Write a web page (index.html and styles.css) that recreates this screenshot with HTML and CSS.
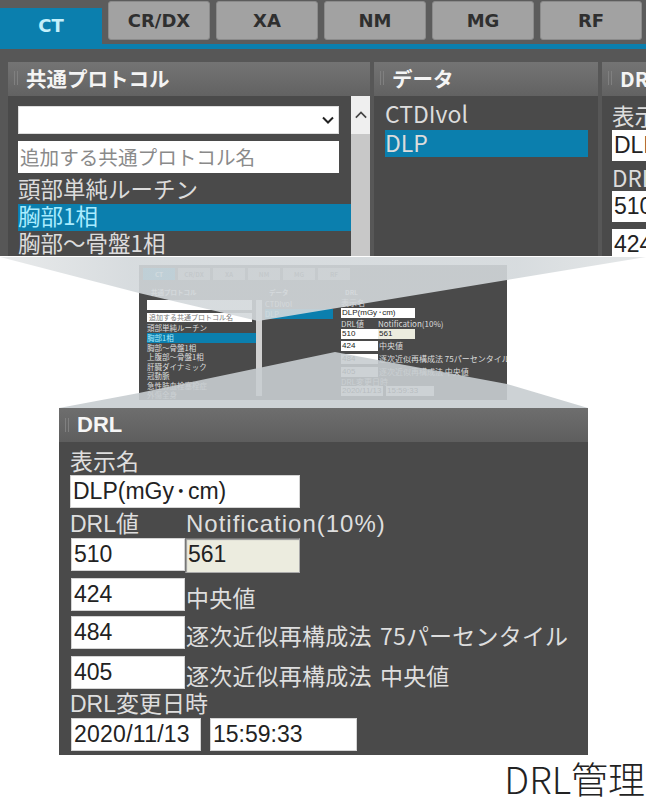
FILE: index.html
```html
<!DOCTYPE html>
<html lang="ja">
<head>
<meta charset="utf-8">
<title>DRL管理</title>
<link rel="stylesheet" href="styles.css">
</head>
<body>
<div class="page">
  <section class="top">
    <nav class="tabs">
      <div class="tab tab-on">CT</div>
      <div class="tab">CR/DX</div>
      <div class="tab">XA</div>
      <div class="tab">NM</div>
      <div class="tab">MG</div>
      <div class="tab">RF</div>
    </nav>
    <div class="tabline"></div>
    <div class="cols">
      <div class="col col-a">
        <div class="head"><span class="grip"></span>共通プロトコル</div>
        <div class="col-a-body">
          <div class="col-a-main">
            <div class="sel"><svg class="chev" viewBox="0 0 12 8"><path d="M1 1.5 6 6.5 11 1.5" fill="none" stroke="#222" stroke-width="2"/></svg></div>
            <div class="ph">追加する共通プロトコル名</div>
            <div class="item">頭部単純ルーチン</div>
            <div class="item item-on">胸部1相</div>
            <div class="item">胸部～骨盤1相</div>
          </div>
          <div class="bar"><div class="bar-btn"><svg class="chev" viewBox="0 0 14 9"><path d="M1 7.5 7 1.5 13 7.5" fill="none" stroke="#444" stroke-width="2"/></svg></div></div>
        </div>
      </div>
      <div class="col col-b">
        <div class="head"><span class="grip"></span>データ</div>
        <div class="col-b-body">
          <div class="ditem">CTDIvol</div>
          <div class="ditem item-on">DLP</div>
        </div>
      </div>
      <div class="col col-c">
        <div class="head"><span class="grip"></span>DRL</div>
        <div class="col-c-body">
          <div class="clabel">表示名</div>
          <div class="cfield">DLP(mGy<span class="dot">・</span>cm)</div>
          <div class="clabel clabel-b">DRL値</div>
          <div class="cfield">510</div>
          <div class="cfield cfield-b">424</div>
        </div>
      </div>
    </div>
  </section>

  <section class="middle">
    <div class="mini">
      <div class="m-tabs"><span class="m-tab m-tab-on">CT</span><span class="m-tab">CR/DX</span><span class="m-tab">XA</span><span class="m-tab">NM</span><span class="m-tab">MG</span><span class="m-tab">RF</span></div>
      <div class="m-cols">
        <div class="m-a">
          <div class="m-head">共通プロトコル</div>
          <div class="m-a-body">
            <div class="m-a-main">
              <div class="m-sel"></div>
              <div class="m-ph">追加する共通プロトコル名</div>
              <div class="m-item">頭部単純ルーチン</div>
              <div class="m-item m-on">胸部1相</div>
              <div class="m-item">胸部～骨盤1相</div>
              <div class="m-item">上腹部～骨盤1相</div>
              <div class="m-item">肝臓ダイナミック</div>
              <div class="m-item">冠動脈</div>
              <div class="m-item">急性肺血栓塞栓症</div>
              <div class="m-item">外傷全身</div>
            </div>
            <div class="m-bar"></div>
          </div>
        </div>
        <div class="m-b">
          <div class="m-head">データ</div>
          <div class="m-item m-dtop">CTDIvol</div>
          <div class="m-item m-on">DLP</div>
        </div>
        <div class="m-c">
          <div class="m-head">DRL</div>
          <div class="m-label">表示名</div>
          <div class="m-field m-wide">DLP(mGy<span class="m-dot">・</span>cm)</div>
          <div class="m-row m-label m-pair"><span class="m-cell">DRL値</span><span>Notification(10%)</span></div>
          <div class="m-row m-row-first"><div class="m-field m-cell">510</div><div class="m-field m-cell m-ro">561</div></div>
          <div class="m-row m-row-second"><div class="m-field m-cell">424</div><span class="m-note">中央値</span></div>
          <div class="m-row"><div class="m-field m-cell">484</div><span class="m-note">逐次近似再構成法 75パーセンタイル</span></div>
          <div class="m-row"><div class="m-field m-cell">405</div><span class="m-note">逐次近似再構成法 中央値</span></div>
          <div class="m-label">DRL変更日時</div>
          <div class="m-row m-dates"><div class="m-field m-date">2020/11/13</div><div class="m-field m-time">15:59:33</div></div>
        </div>
      </div>
    </div>
    <svg class="fans" viewBox="0 256 648 152" aria-hidden="true">
      <defs>
        <linearGradient id="fanTop" x1="0" x2="1" y1="0" y2="0">
          <stop offset="0" stop-color="#e6e8e9"/>
          <stop offset="0.2" stop-color="#d3d8db"/>
          <stop offset="0.8" stop-color="#d3d8db"/>
          <stop offset="1" stop-color="#e2e5e6"/>
        </linearGradient>
      </defs>
      <polygon points="0,257 646,257 507,280 258,321 139,293" fill="url(#fanTop)" fill-opacity="0.9"/>
      <polygon points="59,408 588,408 507,384 335,352 139,393" fill="#c8cdd0" fill-opacity="0.9"/>
    </svg>
  </section>

  <section class="panel">
    <div class="panel-head"><span class="grip"></span>DRL</div>
    <div class="panel-body">
      <div class="lab lab-name">表示名</div>
      <div class="inp inp-name">DLP(mGy<span class="dot">・</span>cm)</div>
      <div class="lab lab-pair"><span class="col1">DRL値</span><span class="notif">Notification(10%)</span></div>
      <div class="row row-first"><div class="inp inp-val">510</div><div class="inp inp-ro">561</div></div>
      <div class="row row-a"><div class="inp inp-val">424</div><span class="note">中央値</span></div>
      <div class="row row-b"><div class="inp inp-val">484</div><span class="note">逐次近似再構成法 75パーセンタイル</span></div>
      <div class="row row-a"><div class="inp inp-val">405</div><span class="note">逐次近似再構成法 中央値</span></div>
      <div class="lab lab-date">DRL変更日時</div>
      <div class="row row-date"><div class="inp inp-date">2020/11/13</div><div class="inp inp-time">15:59:33</div></div>
    </div>
  </section>

  <div class="caption">DRL管理</div>
</div>
</body>
</html>
```
FILE: styles.css
```css
* { box-sizing: border-box; }
html, body { margin: 0; padding: 0; background: #fff; }
body { font-family: "Noto Sans CJK JP", "Liberation Sans", sans-serif; }
.page { width: 648px; height: 800px; overflow: hidden; position: relative; }

/* top capture */
.top { width: 646px; height: 256px; background: #4a4a4a; overflow: hidden; }
.tabs { display: flex; gap: 6px; height: 44px; background: #5c5c5c; align-items: flex-start; padding-top: 1px; }
.tab { flex: 0 0 102px; height: 39px; background: #a2a2a2; border: 1px solid #8b8b8b; border-radius: 3px; font: bold 18px/37px "DejaVu Sans", sans-serif; color: #2f2f2f; text-align: center; }
.tab-on { height: 36px; margin-top: 7px; background: #0b7fae; border: 0; border-radius: 0; color: #c4f0fb; line-height: 36px; }
.tabline { height: 5px; background: #0b7fae; }
.cols { display: flex; gap: 4px; height: 207px; padding-left: 8px; background: #575757; padding-top: 13px; }
.col { display: flex; flex-direction: column; background: #4a4a4a; }
.col-a { width: 362px; }
.col-b { width: 224px; }
.col-c { flex: 1; min-width: 0; overflow: hidden; }
.head { height: 34px; flex: none; padding-bottom: 2px; background: linear-gradient(#747474, #626262); color: #f4f4f4; font-weight: bold; font-size: 20.5px; line-height: 30px; white-space: nowrap; display: flex; align-items: center; }
.grip { width: 4px; height: 14px; margin: 0 8px 0 6px; flex: none; border-left: 1px solid #808080; border-right: 1px solid #808080; }
.col-a-body { display: flex; flex: 1; min-height: 0; }
.col-a-main { width: 343px; padding: 10px 0 0 10px; overflow: hidden; }
.sel { width: 321px; height: 28px; background: #fff; border: 1px solid #ddd; display: flex; align-items: center; justify-content: flex-end; padding-right: 4px; }
.chev { width: 12px; height: 8px; display: block; }
.ph { width: 321px; height: 32px; margin: 7px 0 4px; background: #fff; color: #8a8a8a; font-size: 19.6px; line-height: 31px; padding-left: 2px; white-space: nowrap; }
.item { height: 27px; font-size: 22.5px; line-height: 23px; color: #dcdcdc; white-space: nowrap; }
.item-on { background: #0b7fae; color: #a9ecff; }
.bar { width: 19px; background: #c8c8c8; }
.bar-btn { height: 38px; background: #efefef; display: flex; align-items: center; justify-content: center; }
.col-b-body { padding: 5px 10px 0 11px; }
.ditem { height: 28px; font-size: 23px; line-height: 24px; color: #dcdcdc; }
.col-b-body .item-on { height: 27px; margin-top: 1px; line-height: 24px; }
.col-c-body { padding-left: 10px; width: 300px; }
.clabel { height: 34px; font-size: 22.5px; line-height: 38px; color: #dcdcdc; white-space: nowrap; }
.clabel-b { height: 30px; line-height: 32px; }
.cfield { width: 114px; height: 31px; background: #fff; color: #222; font: 23px/31px "Liberation Sans", sans-serif; padding-left: 2px; white-space: nowrap; }
.cfield-b { margin-top: 7px; }
.dot { margin: 0 -4.5px; }

/* middle */
.middle { height: 152px; position: relative; background: #fff; padding: 9px 0 0 139px; }
.mini { width: 368px; height: 135px; background: #4a4a4a; padding: 3px 0 0 0; overflow: hidden; color: #dcdcdc; font-size: 7.5px; line-height: 10px; }
.m-tabs { display: flex; gap: 3px; height: 12px; margin-bottom: 4px; padding-left: 4px; }
.m-tab { width: 32px; background: #9a9a9a; color: #333; font-size: 6.5px; line-height: 12px; text-align: center; font-weight: bold; }
.m-tab-on { background: #0b7fae; color: #c4f0fb; }
.m-cols { display: flex; padding-left: 8px; }
.m-a { width: 115px; margin-right: 3px; }
.m-b { width: 68px; margin-right: 8px; }
.m-c { width: 160px; font-size: 8px; }
.m-head { height: 14px; font-size: 6.5px; line-height: 16px; white-space: nowrap; padding-left: 4px; font-weight: bold; }
.m-a-body { display: flex; padding-top: 2px; }
.m-a-main { width: 109px; }
.m-bar { width: 6px; height: 96px; background: #d0d0d0; }
.m-sel { width: 105px; height: 10px; background: #fff; }
.m-ph { width: 105px; height: 9px; margin-top: 3px; background: #fff; color: #777; white-space: nowrap; padding-left: 2px; font-size: 7px; line-height: 9px; }
.m-item { height: 9.5px; line-height: 9.5px; white-space: nowrap; }
.m-ph + .m-item { margin-top: 1px; }
.m-on { background: #0b7fae; color: #a9ecff; height: 10px; line-height: 10px; }
.m-dtop { margin-top: 1px; height: 10px; }
.m-label { height: 10px; line-height: 10px; white-space: nowrap; }
.m-field { background: #fff; color: #222; font-family: "Liberation Sans", sans-serif; height: 10px; line-height: 10px; padding-left: 1px; white-space: nowrap; }
.m-wide { width: 74px; }
.m-dot { margin: 0 -1.5px; }
.m-row { display: flex; margin-top: 3px; white-space: nowrap; }
.m-row.m-pair { margin-top: 1px; }
.m-row-first { margin-top: 0; }
.m-row-second { margin-top: 2px; }
.m-cell { width: 37px; flex: none; }
.m-ro { background: #ececdf; }
.m-note { padding-left: 1px; }
.m-dates { gap: 3px; margin-top: -1px; }
.m-date { width: 42px; flex: none; }
.m-time { width: 48px; flex: none; }
.fans { position: absolute; left: 0; top: 0; width: 648px; height: 152px; display: block; }

/* lower panel */
.panel { width: 529px; height: 347px; margin-left: 59px; background: #4a4a4a; color: #dedede; }
.panel-head { height: 34px; background: linear-gradient(#6e6e6e, #5e5e5e); color: #f6f6f6; font: bold 22px/34px "Liberation Sans", sans-serif; display: flex; align-items: center; }
.panel-body { padding: 4px 0 0 11px; }
.lab { font-size: 23px; white-space: nowrap; }
.lab-name { height: 29px; line-height: 29px; }
.lab-pair { height: 30px; line-height: 32px; display: flex; font-family: "Liberation Sans", "Noto Sans CJK JP", sans-serif; font-size: 24px; }
.notif { letter-spacing: 1px; }
.col1 { width: 116px; flex: none; font-size: 23px; }
.lab-date { height: 29px; line-height: 31px; font-family: "Liberation Sans", "Noto Sans CJK JP", sans-serif; }
.inp { background: #fff; color: #222; font: 23px/30px "Liberation Sans", sans-serif; height: 33px; padding-left: 2px; border: 1px solid #d4d4d4; white-space: nowrap; }
.inp-name { width: 230px; line-height: 31px; }
.inp-val { width: 114px; flex: none; margin-left: 1px; }
.inp-ro { width: 115px; height: 35px; background: #ececdf; border: 1px solid #aaa; border-top-color: #777; border-left-color: #777; box-shadow: inset 1px 1px 1px #999; }
.row { display: flex; align-items: flex-start; height: 33px; }
.row-a { margin-top: 7px; }
.row-b { margin-top: 5px; }
.note { font-size: 23px; line-height: 38px; white-space: nowrap; padding-left: 1px; word-spacing: 3px; letter-spacing: 0.2px; }
.row-date { gap: 9px; }
.inp-date { width: 130px; margin-left: 1px; letter-spacing: 0.25px; }
.inp-time { width: 147px; }

.caption { margin-top: 2px; height: 43px; padding-right: 3px; text-align: right; font-size: 37px; line-height: 42px; font-weight: 300; color: #222; white-space: nowrap; }
```
